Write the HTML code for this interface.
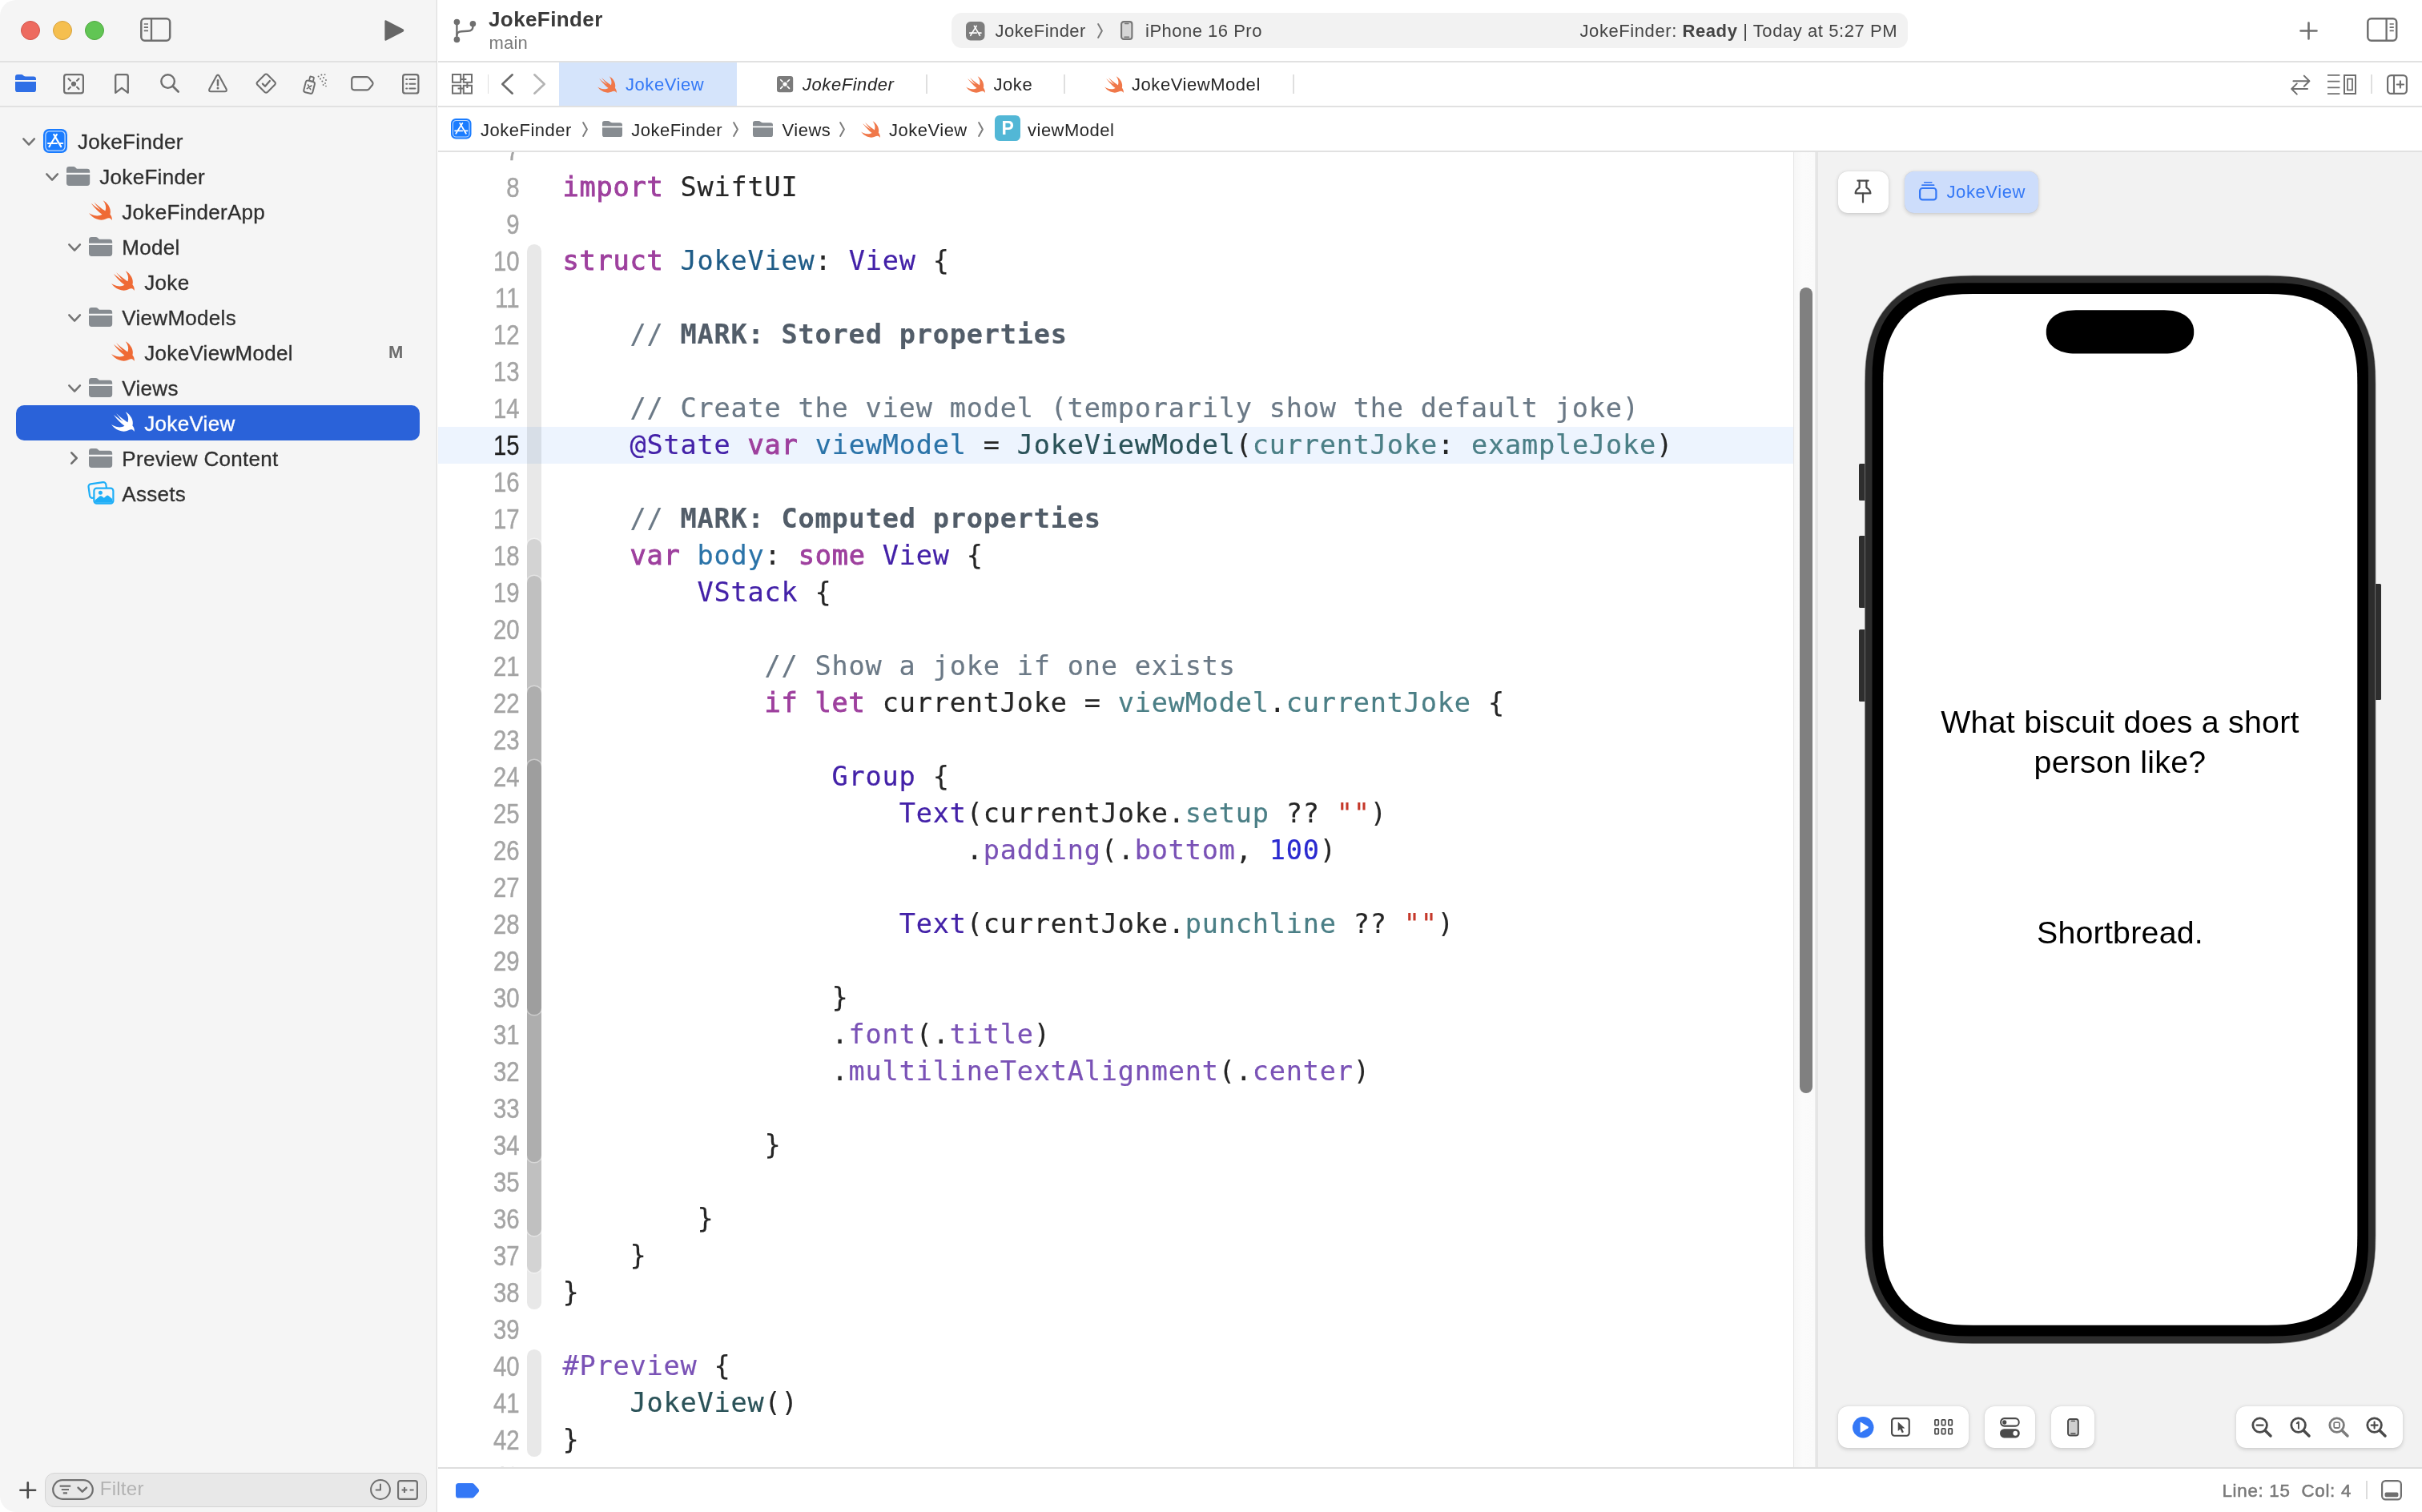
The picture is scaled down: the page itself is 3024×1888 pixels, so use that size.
<!DOCTYPE html>
<html lang="en"><head><meta charset="utf-8"><title>JokeFinder — JokeView.swift</title>
<style>
html,body{margin:0;padding:0;background:#fff;}
body{width:3024px;height:1888px;overflow:hidden;position:relative;font-family:"Liberation Sans",sans-serif;color:#262626;}
#win{transform:translateZ(0);will-change:transform;position:absolute;left:0;top:0;width:3024px;height:1888px;border-radius:20px;overflow:hidden;background:#fff;}
.abs{position:absolute;}
svg{position:absolute;overflow:visible;}
.t{position:absolute;white-space:pre;line-height:1;}
/* sidebar */
#side{position:absolute;left:0;top:0;width:545px;height:1888px;background:#f5f5f5;}
#sidediv{position:absolute;left:544.6px;top:0;width:1.5px;height:1888px;background:#dedede;box-shadow:-1px 0 1px rgba(0,0,0,.03);}
.hl{position:absolute;height:2px;background:#e1e1e1;}
.row{position:absolute;left:0;width:545px;height:44px;}
.row .lbl{position:absolute;top:8px;font-size:26px;line-height:30px;letter-spacing:.3px;color:#2f2f2f;-webkit-text-stroke:.3px #2f2f2f;white-space:pre;}
.row.sel .lbl{color:#fff;-webkit-text-stroke:.35px #fff;}
/* code */
#ed{position:absolute;left:546.5px;top:190px;width:1692.5px;height:1642px;overflow:hidden;background:#fff;}
.cl{position:absolute;left:156px;letter-spacing:.79px;height:46px;line-height:46px;white-space:pre;font-family:"DejaVu Sans Mono","Liberation Mono",monospace;font-size:33.6px;color:#262626;-webkit-text-stroke-width:.2px;}
.ln{position:absolute;left:0;width:101.5px;height:46px;line-height:46px;text-align:right;font-size:34.5px;color:#a4a4a4;-webkit-text-stroke:.45px #a4a4a4;transform:scaleX(.85);transform-origin:100% 50%;}
.ln.cur{color:#1f1f1f;-webkit-text-stroke:.3px #1f1f1f;}
.k{color:#9e409e;-webkit-text-stroke:.9px #9e409e;}
.c{color:#6b7986;}
.m{color:#525d69;font-weight:bold;}
.td{color:#1f5c87;}
.od{color:#2a73a8;}
.pc{color:#2a5258;}
.pf{color:#4b7f86;}
.oc{color:#4321a8;}
.of{color:#7a52b6;}
.s{color:#c5382a;}
.n{color:#2a2ad0;}

</style></head>
<body>
<div id="win">
<div id="side">
<div class="abs" style="left:26px;top:26px;width:24px;height:24px;box-sizing:border-box;border-radius:50%;background:#ed6a5f;border:1px solid #d1544a"></div>
<div class="abs" style="left:66px;top:26px;width:24px;height:24px;box-sizing:border-box;border-radius:50%;background:#f5bf4f;border:1px solid #d6a13d"></div>
<div class="abs" style="left:106px;top:26px;width:24px;height:24px;box-sizing:border-box;border-radius:50%;background:#61c554;border:1px solid #4ea73f"></div>
<svg style="left:175px;top:22px" width="38.5" height="30" viewBox="0 0 38.5 30" ><rect x="1.3" y="1.3" width="35.9" height="27.4" rx="4.4" fill="none" stroke="#6f6f6f" stroke-width="2.5"/><path d="M14 1.5V28.5" stroke="#6f6f6f" stroke-width="2.3"/><path d="M4.8 8H10M4.8 12.2H10M4.8 16.4H10" stroke="#6f6f6f" stroke-width="1.7"/></svg>
<svg style="left:479px;top:24px" width="27" height="28" viewBox="0 0 27 28" ><path d="M1.4 2.6Q1.4 0.6 3.2 1.5L24.6 12.5Q26.2 14 24.6 15.5L3.2 26.5Q1.4 27.4 1.4 25.4Z" fill="#666"/></svg>
<div class="hl" style="left:0;top:76px;width:545px"></div>
<div class="hl" style="left:0;top:132px;width:545px"></div>
<div class="abs" style="left:0;top:-.8px"><svg style="left:19px;top:94px" width="26" height="22" viewBox="0 0 29.2 24" preserveAspectRatio="none"><path d="M0 3.4Q0 0 3.4 0H8.4Q10 0 11.2 1.1L12 1.9Q13 2.8 14.6 2.8H25.8Q29.2 2.8 29.2 6.2V7.7H0Z M0 9.9H29.2V20.6Q29.2 24 25.8 24H3.4Q0 24 0 20.6Z" fill="#2f6fe6"/></svg><svg style="left:79px;top:92.5px" width="26" height="25.5" viewBox="0 0 26 25.5" ><rect x="1.1" y="1.1" width="23.8" height="23.3" rx="2.8" fill="none" stroke="#6f6f6f" stroke-width="2.2"/><g stroke="#6f6f6f" stroke-width="2.2" stroke-linecap="round"><path d="M6.5 6.3L8.9 8.7M19.5 6.3L17.1 8.7M6.5 19.2L8.9 16.8M19.5 19.2L17.1 16.8"/></g><circle cx="13" cy="12.75" r="3.1" fill="#6f6f6f"/></svg><svg style="left:143px;top:92.5px" width="18" height="25.5" viewBox="0 0 18 25.5" ><path d="M1.2 3.4Q1.2 1.2 3.4 1.2H14.6Q16.8 1.2 16.8 3.4V23.8L9 17.9L1.2 23.8Z" fill="none" stroke="#6f6f6f" stroke-width="2.3" stroke-linejoin="round"/></svg><svg style="left:200px;top:93px" width="24" height="24" viewBox="0 0 24 24" ><circle cx="9.6" cy="9.6" r="8.3" fill="none" stroke="#6f6f6f" stroke-width="2.4"/><path d="M15.8 15.8L22.6 22.6" stroke="#6f6f6f" stroke-width="2.8" stroke-linecap="round"/></svg><svg style="left:260px;top:92.5px" width="24" height="23.5" viewBox="0 0 24 23.5" ><path d="M12 1.6Q12.9 1.6 13.5 2.6L22.6 19.2Q23.6 22.2 20.8 22.3H3.2Q0.4 22.2 1.4 19.2L10.5 2.6Q11.1 1.6 12 1.6Z" fill="none" stroke="#6f6f6f" stroke-width="2.1" stroke-linejoin="round"/><path d="M12 8.3V14.2" stroke="#6f6f6f" stroke-width="2.5" stroke-linecap="round"/><circle cx="12" cy="18.1" r="1.5" fill="#6f6f6f"/></svg><svg style="left:319px;top:91.7px" width="26.5" height="26.3" viewBox="0 0 26.5 26.3" ><path d="M13.25 1.5Q14.2 1.5 15 2.3L24.4 11.7Q25.6 13.15 24.4 14.6L15 24Q13.25 25.4 11.5 24L2.1 14.6Q0.9 13.15 2.1 11.7L11.5 2.3Q12.3 1.5 13.25 1.5Z" fill="none" stroke="#6f6f6f" stroke-width="2.1" stroke-linejoin="round"/><path d="M8.9 13.6L12 16.7L17.9 10" fill="none" stroke="#6f6f6f" stroke-width="2.3" stroke-linecap="round" stroke-linejoin="round"/></svg><svg style="left:377.5px;top:92.5px" width="30" height="26" viewBox="0 0 30 26" ><g transform="rotate(14 9 16)"><rect x="2.6" y="9.4" width="11.4" height="15" rx="2.4" fill="none" stroke="#6f6f6f" stroke-width="2"/><rect x="6.2" y="3.6" width="5" height="5.6" rx="1" fill="none" stroke="#6f6f6f" stroke-width="1.8"/><path d="M6.1 14.6L10.6 19.4M10.6 14.6L6.1 19.4" stroke="#6f6f6f" stroke-width="1.7" stroke-linecap="round"/></g><g fill="#6f6f6f"><circle cx="19.6" cy="3.4" r="1"/><circle cx="23.4" cy="1.6" r="1"/><circle cx="27.6" cy="1.2" r=".9"/><circle cx="22" cy="6.4" r="1"/><circle cx="26" cy="5" r="1"/><circle cx="29" cy="8" r=".9"/><circle cx="24.4" cy="9.6" r="1"/><circle cx="28" cy="12" r=".9"/><circle cx="25.6" cy="14" r=".9"/><circle cx="29" cy="15.6" r=".8"/></g></svg><svg style="left:437.5px;top:96px" width="29" height="18.5" viewBox="0 0 29 18.5" ><path d="M4.2 1.2H20.2Q21.8 1.2 22.8 2.4L27.2 7.8Q28.2 9.25 27.2 10.7L22.8 16.1Q21.8 17.3 20.2 17.3H4.2Q1.2 17.3 1.2 14.3V4.2Q1.2 1.2 4.2 1.2Z" fill="none" stroke="#6f6f6f" stroke-width="2.2" stroke-linejoin="round"/></svg><svg style="left:501.5px;top:92.3px" width="21.5" height="25.6" viewBox="0 0 21.5 25.6" ><rect x="1.1" y="1.1" width="19.3" height="23.4" rx="2.8" fill="none" stroke="#6f6f6f" stroke-width="2.2"/><g stroke="#6f6f6f" stroke-width="2" stroke-linecap="round"><path d="M5.2 7H6.2M9.4 7H16.4M5.2 12.8H6.2M9.4 12.8H16.4M5.2 18.6H6.2M9.4 18.6H16.4"/></g></svg></div>
<div class="row" style="top:154px"><svg style="left:27.9px;top:17.7px" width="16.2" height="10" viewBox="0 0 16.2 10" ><path d="M1.3 1.3L8.1 8.7L14.899999999999999 1.3" fill="none" stroke="#747474" stroke-width="2.5" stroke-linecap="round" stroke-linejoin="round"/></svg><svg style="left:54px;top:7px" width="30" height="30" viewBox="0 0 30 30" ><rect x="0" y="0" width="30" height="30" rx="7.2" fill="#1a7cff"/><rect x="2.9" y="2.9" width="24.2" height="24.2" rx="4.8" fill="none" stroke="#fff" stroke-opacity=".72" stroke-width="1.3"/><g stroke="#fff" stroke-width="2.1" stroke-linecap="round" fill="none"><path d="M16.9 6.9L9.9 18.05"/><path d="M13.2 6.9L22.2 22.1"/><path d="M6 18.05H16.9"/><path d="M20.9 18.05H24.2"/><path d="M8.9 19.8L7.4 22.1"/></g></svg><span class="lbl" style="left:97px">JokeFinder</span></div>
<div class="row" style="top:198px"><svg style="left:56.9px;top:17.7px" width="16.2" height="10" viewBox="0 0 16.2 10" ><path d="M1.3 1.3L8.1 8.7L14.899999999999999 1.3" fill="none" stroke="#747474" stroke-width="2.5" stroke-linecap="round" stroke-linejoin="round"/></svg><svg style="left:82.8px;top:10px" width="29.2" height="24" viewBox="0 0 29.2 24" preserveAspectRatio="none"><path d="M0 3.4Q0 0 3.4 0H8.4Q10 0 11.2 1.1L12 1.9Q13 2.8 14.6 2.8H25.8Q29.2 2.8 29.2 6.2V7.7H0Z M0 9.9H29.2V20.6Q29.2 24 25.8 24H3.4Q0 24 0 20.6Z" fill="#878c91"/></svg><span class="lbl" style="left:124.3px">JokeFinder</span></div>
<div class="row" style="top:242px"><svg style="left:111px;top:8.2px" width="29" height="25" viewBox="2.35 3.3 18.3 16.5" preserveAspectRatio="none"><path d="M13.543 3.41c4.114 2.47 6.545 7.162 5.549 11.131-.024.093-.05.181-.076.272l.002.001c2.062 2.538 1.5 5.258 1.236 4.745-1.072-2.086-3.066-1.568-4.088-1.043a6.803 6.803 0 0 1-.281.158l-.02.012-.002.002c-2.115 1.123-4.957 1.205-7.812-.022a12.568 12.568 0 0 1-5.64-4.838c.649.48 1.35.902 2.097 1.252 3.019 1.414 6.051 1.311 8.197-.002C9.651 12.73 7.101 9.67 5.146 7.191a10.628 10.628 0 0 1-1.005-1.384c2.34 2.142 6.038 4.83 7.365 5.576C8.69 8.408 6.208 4.743 6.324 4.86c4.436 4.47 8.528 6.996 8.528 6.996.154.085.27.154.36.213.085-.215.16-.437.224-.668.708-2.588-.09-5.548-1.893-7.992z" fill="#ef6a35"/></svg><span class="lbl" style="left:152.3px">JokeFinderApp</span></div>
<div class="row" style="top:286px"><svg style="left:84.9px;top:17.7px" width="16.2" height="10" viewBox="0 0 16.2 10" ><path d="M1.3 1.3L8.1 8.7L14.899999999999999 1.3" fill="none" stroke="#747474" stroke-width="2.5" stroke-linecap="round" stroke-linejoin="round"/></svg><svg style="left:110.8px;top:10px" width="29.2" height="24" viewBox="0 0 29.2 24" preserveAspectRatio="none"><path d="M0 3.4Q0 0 3.4 0H8.4Q10 0 11.2 1.1L12 1.9Q13 2.8 14.6 2.8H25.8Q29.2 2.8 29.2 6.2V7.7H0Z M0 9.9H29.2V20.6Q29.2 24 25.8 24H3.4Q0 24 0 20.6Z" fill="#878c91"/></svg><span class="lbl" style="left:152.3px">Model</span></div>
<div class="row" style="top:330px"><svg style="left:139px;top:8.2px" width="29" height="25" viewBox="2.35 3.3 18.3 16.5" preserveAspectRatio="none"><path d="M13.543 3.41c4.114 2.47 6.545 7.162 5.549 11.131-.024.093-.05.181-.076.272l.002.001c2.062 2.538 1.5 5.258 1.236 4.745-1.072-2.086-3.066-1.568-4.088-1.043a6.803 6.803 0 0 1-.281.158l-.02.012-.002.002c-2.115 1.123-4.957 1.205-7.812-.022a12.568 12.568 0 0 1-5.64-4.838c.649.48 1.35.902 2.097 1.252 3.019 1.414 6.051 1.311 8.197-.002C9.651 12.73 7.101 9.67 5.146 7.191a10.628 10.628 0 0 1-1.005-1.384c2.34 2.142 6.038 4.83 7.365 5.576C8.69 8.408 6.208 4.743 6.324 4.86c4.436 4.47 8.528 6.996 8.528 6.996.154.085.27.154.36.213.085-.215.16-.437.224-.668.708-2.588-.09-5.548-1.893-7.992z" fill="#ef6a35"/></svg><span class="lbl" style="left:180.3px">Joke</span></div>
<div class="row" style="top:374px"><svg style="left:84.9px;top:17.7px" width="16.2" height="10" viewBox="0 0 16.2 10" ><path d="M1.3 1.3L8.1 8.7L14.899999999999999 1.3" fill="none" stroke="#747474" stroke-width="2.5" stroke-linecap="round" stroke-linejoin="round"/></svg><svg style="left:110.8px;top:10px" width="29.2" height="24" viewBox="0 0 29.2 24" preserveAspectRatio="none"><path d="M0 3.4Q0 0 3.4 0H8.4Q10 0 11.2 1.1L12 1.9Q13 2.8 14.6 2.8H25.8Q29.2 2.8 29.2 6.2V7.7H0Z M0 9.9H29.2V20.6Q29.2 24 25.8 24H3.4Q0 24 0 20.6Z" fill="#878c91"/></svg><span class="lbl" style="left:152.3px">ViewModels</span></div>
<div class="row" style="top:418px"><svg style="left:139px;top:8.2px" width="29" height="25" viewBox="2.35 3.3 18.3 16.5" preserveAspectRatio="none"><path d="M13.543 3.41c4.114 2.47 6.545 7.162 5.549 11.131-.024.093-.05.181-.076.272l.002.001c2.062 2.538 1.5 5.258 1.236 4.745-1.072-2.086-3.066-1.568-4.088-1.043a6.803 6.803 0 0 1-.281.158l-.02.012-.002.002c-2.115 1.123-4.957 1.205-7.812-.022a12.568 12.568 0 0 1-5.64-4.838c.649.48 1.35.902 2.097 1.252 3.019 1.414 6.051 1.311 8.197-.002C9.651 12.73 7.101 9.67 5.146 7.191a10.628 10.628 0 0 1-1.005-1.384c2.34 2.142 6.038 4.83 7.365 5.576C8.69 8.408 6.208 4.743 6.324 4.86c4.436 4.47 8.528 6.996 8.528 6.996.154.085.27.154.36.213.085-.215.16-.437.224-.668.708-2.588-.09-5.548-1.893-7.992z" fill="#ef6a35"/></svg><span class="lbl" style="left:180.3px">JokeViewModel</span><span class="t" style="left:485px;top:11px;font-size:22px;font-weight:bold;color:#6e6e6e">M</span></div>
<div class="row" style="top:462px"><svg style="left:84.9px;top:17.7px" width="16.2" height="10" viewBox="0 0 16.2 10" ><path d="M1.3 1.3L8.1 8.7L14.899999999999999 1.3" fill="none" stroke="#747474" stroke-width="2.5" stroke-linecap="round" stroke-linejoin="round"/></svg><svg style="left:110.8px;top:10px" width="29.2" height="24" viewBox="0 0 29.2 24" preserveAspectRatio="none"><path d="M0 3.4Q0 0 3.4 0H8.4Q10 0 11.2 1.1L12 1.9Q13 2.8 14.6 2.8H25.8Q29.2 2.8 29.2 6.2V7.7H0Z M0 9.9H29.2V20.6Q29.2 24 25.8 24H3.4Q0 24 0 20.6Z" fill="#878c91"/></svg><span class="lbl" style="left:152.3px">Views</span></div>
<div class="row sel" style="top:506px"><div class="abs" style="left:20px;top:0;width:504px;height:44px;border-radius:10px;background:#2a62d9"></div><svg style="left:139px;top:8.2px" width="29" height="25" viewBox="2.35 3.3 18.3 16.5" preserveAspectRatio="none"><path d="M13.543 3.41c4.114 2.47 6.545 7.162 5.549 11.131-.024.093-.05.181-.076.272l.002.001c2.062 2.538 1.5 5.258 1.236 4.745-1.072-2.086-3.066-1.568-4.088-1.043a6.803 6.803 0 0 1-.281.158l-.02.012-.002.002c-2.115 1.123-4.957 1.205-7.812-.022a12.568 12.568 0 0 1-5.64-4.838c.649.48 1.35.902 2.097 1.252 3.019 1.414 6.051 1.311 8.197-.002C9.651 12.73 7.101 9.67 5.146 7.191a10.628 10.628 0 0 1-1.005-1.384c2.34 2.142 6.038 4.83 7.365 5.576C8.69 8.408 6.208 4.743 6.324 4.86c4.436 4.47 8.528 6.996 8.528 6.996.154.085.27.154.36.213.085-.215.16-.437.224-.668.708-2.588-.09-5.548-1.893-7.992z" fill="#fff"/></svg><span class="lbl" style="left:180.3px">JokeView</span></div>
<div class="row" style="top:550px"><svg style="left:87.5px;top:14px" width="9" height="16" viewBox="0 0 9 16" ><path d="M1.3 1.3L7.7 8.0L1.3 14.7" fill="none" stroke="#6e6e6e" stroke-width="2.6" stroke-linecap="round" stroke-linejoin="round"/></svg><svg style="left:110.8px;top:10px" width="29.2" height="24" viewBox="0 0 29.2 24" preserveAspectRatio="none"><path d="M0 3.4Q0 0 3.4 0H8.4Q10 0 11.2 1.1L12 1.9Q13 2.8 14.6 2.8H25.8Q29.2 2.8 29.2 6.2V7.7H0Z M0 9.9H29.2V20.6Q29.2 24 25.8 24H3.4Q0 24 0 20.6Z" fill="#878c91"/></svg><span class="lbl" style="left:152.3px">Preview Content</span></div>
<div class="row" style="top:594px"><svg style="left:109.5px;top:8px" width="33" height="28" viewBox="0 0 33 28" ><rect x="1.2" y="1.2" width="22" height="17.6" rx="3.2" fill="#f6f6f6" stroke="#1eaef7" stroke-width="2.2" transform="rotate(-8 12 10)"/><rect x="7.4" y="7.6" width="24" height="19" rx="3.4" fill="#f6f6f6" stroke="#1eaef7" stroke-width="2.2"/><path d="M8.6 22.6L14.6 17.6Q15.8 16.8 17 17.6L19.8 19.8L23 16.9Q24.2 16 25.4 16.9L30.2 21V24Q30.2 25.8 28 25.8H10.6Q8.6 25.8 8.6 24Z" fill="#1eaef7"/><circle cx="15.4" cy="13.2" r="2.5" fill="#1eaef7"/></svg><span class="lbl" style="left:152.3px">Assets</span></div>
<svg style="left:23.5px;top:1849.5px" width="21.5" height="21.5" viewBox="0 0 21.5 21.5" ><path d="M10.75 1.4V20.1M1.4 10.75H20.1" stroke="#4a4a4a" stroke-width="2.7" stroke-linecap="round"/></svg><div class="abs" style="left:56px;top:1838.5px;width:477px;height:43px;box-sizing:border-box;border-radius:12px;background:#e8e8e8;border:1.5px solid #d4d4d4"></div><svg style="left:65px;top:1847px" width="52" height="26" viewBox="0 0 52 26" ><rect x="1.2" y="1.2" width="49.6" height="23.6" rx="11.8" fill="none" stroke="#6f6f6f" stroke-width="2.2"/><path d="M9.6 8.6H23.2M11.8 13H21M13.8 17.4H19" stroke="#6f6f6f" stroke-width="2.2"/><path d="M32.6 10.6L37.8 15.6L43 10.6" fill="none" stroke="#6f6f6f" stroke-width="2.6" stroke-linecap="round" stroke-linejoin="round"/></svg><span class="t" style="left:124.8px;top:1845.4px;font-size:24px;line-height:27.58px;color:#b2b2b2;letter-spacing:.25px">Filter</span><svg style="left:461.5px;top:1847px" width="26" height="26" viewBox="0 0 26 26" ><circle cx="13" cy="13" r="11.9" fill="none" stroke="#6f6f6f" stroke-width="2"/><path d="M13 6.4V13.4H7.6" fill="none" stroke="#6f6f6f" stroke-width="2" stroke-linecap="round" stroke-linejoin="round"/></svg><svg style="left:496px;top:1847.5px" width="26" height="25" viewBox="0 0 26 25" ><rect x="1.1" y="1.1" width="23.8" height="22.8" rx="2.6" fill="none" stroke="#6f6f6f" stroke-width="2.1"/><path d="M5.6 12.5H12.4M9 9.1V15.9M15.6 12.5H20.6" stroke="#6f6f6f" stroke-width="2.1"/></svg>
</div><div id="sidediv"></div>
<svg style="left:566px;top:23px" width="29" height="31" viewBox="0 0 29 31" ><g fill="none" stroke="#6f6f6f" stroke-width="2.4" stroke-linecap="round"><path d="M4.4 7.6V23.4"/><path d="M24.4 9.6V10.4Q24.4 15.4 18 15.8L10.4 16.3Q4.4 16.8 4.4 21"/></g><circle cx="4.4" cy="4.6" r="3.8" fill="#6f6f6f"/><circle cx="24.4" cy="6.8" r="3.8" fill="#6f6f6f"/><circle cx="4.4" cy="26.4" r="3.8" fill="#6f6f6f"/></svg>
<span class="t" style="left:610px;top:9.75px;font-size:26px;line-height:29.87px;color:#3a3a3a;font-weight:bold;letter-spacing:.4px">JokeFinder</span>
<span class="t" style="left:610.5px;top:40.94px;font-size:22px;line-height:25.28px;color:#7a7a7a;letter-spacing:.2px">main</span>
<div class="abs" style="left:1188px;top:15.5px;width:1194px;height:44.5px;border-radius:13px;background:#f2f2f2"></div>
<svg style="left:1206px;top:26.5px" width="23.5" height="23.5" viewBox="0 0 30 30" ><rect x="0" y="0" width="30" height="30" rx="7.2" fill="#7d7d7d"/><g stroke="#fff" stroke-width="2.1" stroke-linecap="round" fill="none"><path d="M16.9 6.9L9.9 18.05"/><path d="M13.2 6.9L22.2 22.1"/><path d="M6 18.05H16.9"/><path d="M20.9 18.05H24.2"/><path d="M8.9 19.8L7.4 22.1"/></g></svg>
<span class="t" style="left:1242.5px;top:25.74px;font-size:22px;line-height:25.28px;color:#444;letter-spacing:.45px">JokeFinder</span>
<svg style="left:1369.5px;top:28.8px" width="7" height="19" viewBox="0 0 7 19" ><path d="M1.1 1.1L5.9 9.5L1.1 17.9" fill="none" stroke="#7c7c7c" stroke-width="2" stroke-linecap="round" stroke-linejoin="round"/></svg>
<svg style="left:1398.5px;top:26px" width="15.5" height="24" viewBox="0 0 15.5 24" ><rect x="1.1" y="1.1" width="13.3" height="21.8" rx="3" fill="#d6d6d6" stroke="#757575" stroke-width="2.1"/><path d="M5.6 3.6H9.9M5 20.2H10.5" stroke="#757575" stroke-width="1.5" stroke-linecap="round"/></svg>
<span class="t" style="left:1430px;top:25.74px;font-size:22px;line-height:25.28px;color:#444;letter-spacing:.5px">iPhone 16 Pro</span>
<span class="t" style="left:1972.5px;top:25.74px;font-size:22px;line-height:25.28px;color:#444;letter-spacing:.58px">JokeFinder: <b>Ready</b> | Today at 5:27 PM</span>
<svg style="left:2870.5px;top:26.5px" width="23" height="23" viewBox="0 0 23 23" ><path d="M11.5 1.5V21.5M1.5 11.5H21.5" stroke="#6f6f6f" stroke-width="2.6" stroke-linecap="round"/></svg>
<svg style="left:2955px;top:22px" width="38.5" height="30" viewBox="0 0 38.5 30" ><rect x="1.3" y="1.3" width="35.9" height="27.4" rx="4.4" fill="none" stroke="#6f6f6f" stroke-width="2.5"/><path d="M24.6 1.5V28.5" stroke="#6f6f6f" stroke-width="2.3"/><path d="M28.6 8H33.8M28.6 12.2H33.8M28.6 16.4H33.8" stroke="#6f6f6f" stroke-width="1.7"/></svg>
<div class="hl" style="left:547px;top:76px;width:2477px"></div>
<div class="abs" style="left:698px;top:78px;width:222px;height:54px;background:#d5e4fb"></div>
<svg style="left:564px;top:92.2px" width="26" height="25.6" viewBox="0 0 26 25.6" ><g fill="none" stroke="#6f6f6f" stroke-width="2"><rect x="1" y="1" width="10.2" height="9.8"/><rect x="14.8" y="1" width="10.2" height="9.8"/><rect x="1" y="14.8" width="10.2" height="9.8"/><rect x="14.8" y="14.8" width="10.2" height="9.8"/><path d="M11.2 7.1H18.4M7.6 18.6H14.8M19.4 10.8V18"/></g></svg>
<div class="abs" style="left:608.5px;top:93px;width:1.5px;height:23.5px;background:#dfdfdf"></div>
<svg style="left:626px;top:92px" width="15" height="26" viewBox="0 0 15 26" ><path d="M13.7 1.3L1.3 13.0L13.7 24.7" fill="none" stroke="#6b6b6b" stroke-width="2.6" stroke-linecap="round" stroke-linejoin="round"/></svg>
<svg style="left:666px;top:92px" width="15" height="26" viewBox="0 0 15 26" ><path d="M1.3 1.3L13.7 13.0L1.3 24.7" fill="none" stroke="#b4b4b4" stroke-width="2.6" stroke-linecap="round" stroke-linejoin="round"/></svg>
<svg style="left:746px;top:95px" width="24" height="21" viewBox="2.35 3.3 18.3 16.5" preserveAspectRatio="none"><path d="M13.543 3.41c4.114 2.47 6.545 7.162 5.549 11.131-.024.093-.05.181-.076.272l.002.001c2.062 2.538 1.5 5.258 1.236 4.745-1.072-2.086-3.066-1.568-4.088-1.043a6.803 6.803 0 0 1-.281.158l-.02.012-.002.002c-2.115 1.123-4.957 1.205-7.812-.022a12.568 12.568 0 0 1-5.64-4.838c.649.48 1.35.902 2.097 1.252 3.019 1.414 6.051 1.311 8.197-.002C9.651 12.73 7.101 9.67 5.146 7.191a10.628 10.628 0 0 1-1.005-1.384c2.34 2.142 6.038 4.83 7.365 5.576C8.69 8.408 6.208 4.743 6.324 4.86c4.436 4.47 8.528 6.996 8.528 6.996.154.085.27.154.36.213.085-.215.16-.437.224-.668.708-2.588-.09-5.548-1.893-7.992z" fill="#f0784a"/></svg>
<span class="t" style="left:781px;top:92.74px;font-size:22px;line-height:25.28px;color:#3378f6;letter-spacing:.55px">JokeView</span>
<svg style="left:969.8px;top:95px" width="20.2" height="20.2" viewBox="0 0 20 20" ><rect x="0" y="0" width="20" height="20" rx="3.2" fill="#7b7b7b"/><g stroke="#fff" stroke-width="1.7" stroke-linecap="round"><path d="M4.7 4.7L6.9 6.9M15.3 4.7L13.1 6.9M4.7 15.3L6.9 13.1M15.3 15.3L13.1 13.1"/></g><circle cx="10" cy="10" r="2.6" fill="#fff"/></svg>
<span class="t" style="left:1002px;top:92.74px;font-size:22px;line-height:25.28px;color:#262626;font-style:italic;letter-spacing:.55px">JokeFinder</span>
<div class="abs" style="left:1156.25px;top:93px;width:1.5px;height:23.5px;background:#dfdfdf"></div>
<div class="abs" style="left:1328.25px;top:93px;width:1.5px;height:23.5px;background:#dfdfdf"></div>
<div class="abs" style="left:1614.25px;top:93px;width:1.5px;height:23.5px;background:#dfdfdf"></div>
<svg style="left:1206px;top:95px" width="24" height="21" viewBox="2.35 3.3 18.3 16.5" preserveAspectRatio="none"><path d="M13.543 3.41c4.114 2.47 6.545 7.162 5.549 11.131-.024.093-.05.181-.076.272l.002.001c2.062 2.538 1.5 5.258 1.236 4.745-1.072-2.086-3.066-1.568-4.088-1.043a6.803 6.803 0 0 1-.281.158l-.02.012-.002.002c-2.115 1.123-4.957 1.205-7.812-.022a12.568 12.568 0 0 1-5.64-4.838c.649.48 1.35.902 2.097 1.252 3.019 1.414 6.051 1.311 8.197-.002C9.651 12.73 7.101 9.67 5.146 7.191a10.628 10.628 0 0 1-1.005-1.384c2.34 2.142 6.038 4.83 7.365 5.576C8.69 8.408 6.208 4.743 6.324 4.86c4.436 4.47 8.528 6.996 8.528 6.996.154.085.27.154.36.213.085-.215.16-.437.224-.668.708-2.588-.09-5.548-1.893-7.992z" fill="#f0784a"/></svg>
<span class="t" style="left:1240.5px;top:92.74px;font-size:22px;line-height:25.28px;color:#262626;letter-spacing:.55px">Joke</span>
<svg style="left:1378.7px;top:95px" width="24" height="21" viewBox="2.35 3.3 18.3 16.5" preserveAspectRatio="none"><path d="M13.543 3.41c4.114 2.47 6.545 7.162 5.549 11.131-.024.093-.05.181-.076.272l.002.001c2.062 2.538 1.5 5.258 1.236 4.745-1.072-2.086-3.066-1.568-4.088-1.043a6.803 6.803 0 0 1-.281.158l-.02.012-.002.002c-2.115 1.123-4.957 1.205-7.812-.022a12.568 12.568 0 0 1-5.64-4.838c.649.48 1.35.902 2.097 1.252 3.019 1.414 6.051 1.311 8.197-.002C9.651 12.73 7.101 9.67 5.146 7.191a10.628 10.628 0 0 1-1.005-1.384c2.34 2.142 6.038 4.83 7.365 5.576C8.69 8.408 6.208 4.743 6.324 4.86c4.436 4.47 8.528 6.996 8.528 6.996.154.085.27.154.36.213.085-.215.16-.437.224-.668.708-2.588-.09-5.548-1.893-7.992z" fill="#f0784a"/></svg>
<span class="t" style="left:1413px;top:92.74px;font-size:22px;line-height:25.28px;color:#262626;letter-spacing:.55px">JokeViewModel</span>
<svg style="left:2860px;top:92.5px" width="24.5" height="26" viewBox="0 0 24.5 26" ><g fill="none" stroke="#6f6f6f" stroke-width="2" stroke-linecap="round" stroke-linejoin="round"><path d="M3.4 8.2H23.2M16.8 1.6L23.4 8.2L16.8 14.8"/><path d="M21 18H1.4M7.8 11.4L1.2 18L7.8 24.6"/></g></svg>
<svg style="left:2906px;top:92.5px" width="36" height="25" viewBox="0 0 36 25" ><g stroke="#6f6f6f" stroke-width="1.7"><path d="M0 .9H15.4M0 8.6H15.4M0 16.4H15.4M0 24.1H15.4"/></g><rect x="21" y="1" width="14" height="23" fill="none" stroke="#6f6f6f" stroke-width="2"/><rect x="25" y="5.6" width="6" height="13.8" fill="none" stroke="#6f6f6f" stroke-width="1.8"/></svg>
<div class="abs" style="left:2960px;top:93px;width:1.5px;height:23.5px;background:#dfdfdf"></div>
<svg style="left:2980px;top:92.5px" width="26" height="25" viewBox="0 0 26 25" ><rect x="1.1" y="1.1" width="23.8" height="22.8" rx="4.2" fill="none" stroke="#6f6f6f" stroke-width="2.2"/><path d="M9 1.5V23.5" stroke="#6f6f6f" stroke-width="2.1"/><path d="M12.8 12.5H21M16.9 8.4V16.6" stroke="#6f6f6f" stroke-width="2.1" stroke-linecap="round"/></svg>
<div class="hl" style="left:547px;top:132px;width:2477px"></div>
<svg style="left:563px;top:148px" width="25.5" height="25.5" viewBox="0 0 30 30" ><rect x="0" y="0" width="30" height="30" rx="7.2" fill="#1a7cff"/><rect x="2.9" y="2.9" width="24.2" height="24.2" rx="4.8" fill="none" stroke="#fff" stroke-opacity=".72" stroke-width="1.3"/><g stroke="#fff" stroke-width="2.1" stroke-linecap="round" fill="none"><path d="M16.9 6.9L9.9 18.05"/><path d="M13.2 6.9L22.2 22.1"/><path d="M6 18.05H16.9"/><path d="M20.9 18.05H24.2"/><path d="M8.9 19.8L7.4 22.1"/></g></svg>
<span class="t" style="left:600px;top:149.74px;font-size:22px;line-height:25.28px;color:#262626;letter-spacing:.5px">JokeFinder</span>
<svg style="left:727px;top:152.2px" width="7" height="19" viewBox="0 0 7 19" ><path d="M1.1 1.1L5.9 9.5L1.1 17.9" fill="none" stroke="#7c7c7c" stroke-width="2" stroke-linecap="round" stroke-linejoin="round"/></svg>
<svg style="left:752px;top:150.7px" width="25" height="20" viewBox="0 0 29.2 24" preserveAspectRatio="none"><path d="M0 3.4Q0 0 3.4 0H8.4Q10 0 11.2 1.1L12 1.9Q13 2.8 14.6 2.8H25.8Q29.2 2.8 29.2 6.2V7.7H0Z M0 9.9H29.2V20.6Q29.2 24 25.8 24H3.4Q0 24 0 20.6Z" fill="#878c91"/></svg>
<span class="t" style="left:788.2px;top:149.74px;font-size:22px;line-height:25.28px;color:#262626;letter-spacing:.5px">JokeFinder</span>
<svg style="left:915px;top:152.2px" width="7" height="19" viewBox="0 0 7 19" ><path d="M1.1 1.1L5.9 9.5L1.1 17.9" fill="none" stroke="#7c7c7c" stroke-width="2" stroke-linecap="round" stroke-linejoin="round"/></svg>
<svg style="left:939.7px;top:150.7px" width="25" height="20" viewBox="0 0 29.2 24" preserveAspectRatio="none"><path d="M0 3.4Q0 0 3.4 0H8.4Q10 0 11.2 1.1L12 1.9Q13 2.8 14.6 2.8H25.8Q29.2 2.8 29.2 6.2V7.7H0Z M0 9.9H29.2V20.6Q29.2 24 25.8 24H3.4Q0 24 0 20.6Z" fill="#878c91"/></svg>
<span class="t" style="left:976.5px;top:149.74px;font-size:22px;line-height:25.28px;color:#262626;letter-spacing:.5px">Views</span>
<svg style="left:1048px;top:152.2px" width="7" height="19" viewBox="0 0 7 19" ><path d="M1.1 1.1L5.9 9.5L1.1 17.9" fill="none" stroke="#7c7c7c" stroke-width="2" stroke-linecap="round" stroke-linejoin="round"/></svg>
<svg style="left:1074.6px;top:150.5px" width="24" height="21" viewBox="2.35 3.3 18.3 16.5" preserveAspectRatio="none"><path d="M13.543 3.41c4.114 2.47 6.545 7.162 5.549 11.131-.024.093-.05.181-.076.272l.002.001c2.062 2.538 1.5 5.258 1.236 4.745-1.072-2.086-3.066-1.568-4.088-1.043a6.803 6.803 0 0 1-.281.158l-.02.012-.002.002c-2.115 1.123-4.957 1.205-7.812-.022a12.568 12.568 0 0 1-5.64-4.838c.649.48 1.35.902 2.097 1.252 3.019 1.414 6.051 1.311 8.197-.002C9.651 12.73 7.101 9.67 5.146 7.191a10.628 10.628 0 0 1-1.005-1.384c2.34 2.142 6.038 4.83 7.365 5.576C8.69 8.408 6.208 4.743 6.324 4.86c4.436 4.47 8.528 6.996 8.528 6.996.154.085.27.154.36.213.085-.215.16-.437.224-.668.708-2.588-.09-5.548-1.893-7.992z" fill="#f0784a"/></svg>
<span class="t" style="left:1110px;top:149.74px;font-size:22px;line-height:25.28px;color:#262626;letter-spacing:.5px">JokeView</span>
<svg style="left:1220.7px;top:152.2px" width="7" height="19" viewBox="0 0 7 19" ><path d="M1.1 1.1L5.9 9.5L1.1 17.9" fill="none" stroke="#7c7c7c" stroke-width="2" stroke-linecap="round" stroke-linejoin="round"/></svg>
<div class="abs" style="left:1242px;top:144px;width:32px;height:32px;border-radius:6px;background:#52b7d6"></div>
<span class="t" style="left:1250.5px;top:147.32px;font-size:23px;line-height:26.43px;color:#fff;font-weight:bold">P</span>
<span class="t" style="left:1283px;top:149.74px;font-size:22px;line-height:25.28px;color:#262626;letter-spacing:.5px">viewModel</span>
<div class="hl" style="left:547px;top:188px;width:2477px"></div>
<div class="hl" style="left:547px;top:1832px;width:2477px;background:#dedede"></div>
<svg style="left:568.5px;top:1852px" width="29.5" height="18.5" viewBox="0 0 29.5 18.5" ><path d="M3.6 0H20.2Q22 0 23 1.2L28.6 7.6Q29.8 9.25 28.6 10.9L23 17.3Q22 18.5 20.2 18.5H3.6Q0 18.5 0 14.9V3.6Q0 0 3.6 0Z" fill="#3478f6"/></svg>
<span class="t" style="left:2774.5px;top:1848.66px;font-size:22.3px;line-height:25.62px;color:#797979;letter-spacing:.72px;-webkit-text-stroke:.55px #797979">Line: 15  Col: 4</span>
<div class="abs" style="left:2954px;top:1849px;width:1.5px;height:23px;background:#dcdcdc"></div>
<svg style="left:2973px;top:1848px" width="26" height="25.5" viewBox="0 0 26 25.5" ><rect x="1.1" y="1.1" width="23.8" height="23.3" rx="4.4" fill="none" stroke="#6f6f6f" stroke-width="2.2"/><rect x="4.6" y="15.6" width="16.8" height="5.6" rx="1.6" fill="#6f6f6f"/></svg>
<div id="ed">
<div class="abs" style="left:0;top:342.5px;width:1693px;height:46px;background:#edf4fe"></div>
<div class="abs" style="left:111.8px;top:115.0px;width:17.4px;height:1329.5px;border-radius:8.7px;background:rgba(0,0,0,.092);overflow:hidden"><div class="abs" style="left:0;top:368.0px;width:17.4px;height:915.5px;border-radius:8.7px;background:rgba(0,0,0,.092);box-shadow:0 0 0 1.6px rgba(255,255,255,.38);"><div class="abs" style="left:0;top:46.0px;width:17.4px;height:823.5px;border-radius:8.7px;background:rgba(0,0,0,.092);box-shadow:0 0 0 1.6px rgba(255,255,255,.38);"><div class="abs" style="left:0;top:138.0px;width:17.4px;height:593.5px;border-radius:8.7px;background:rgba(0,0,0,.092);box-shadow:0 0 0 1.6px rgba(255,255,255,.38);"><div class="abs" style="left:0;top:92.0px;width:17.4px;height:317.5px;border-radius:8.7px;background:rgba(0,0,0,.092);box-shadow:0 0 0 1.6px rgba(255,255,255,.38);"></div></div></div></div></div>
<div class="abs" style="left:111.8px;top:1495.0px;width:17.4px;height:133.5px;border-radius:8.7px;background:rgba(0,0,0,.092)"></div>
<div class="ln" style="top:-25.5px">7</div>
<div class="ln" style="top:20.5px">8</div>
<div class="cl" style="top:20.5px"><span class="k">import</span> SwiftUI</div>
<div class="ln" style="top:66.5px">9</div>
<div class="ln" style="top:112.5px">10</div>
<div class="cl" style="top:112.5px"><span class="k">struct</span> <span class="td">JokeView</span>: <span class="oc">View</span> {</div>
<div class="ln" style="top:158.5px">11</div>
<div class="ln" style="top:204.5px">12</div>
<div class="cl" style="top:204.5px">    <span class="c">// </span><span class="m">MARK: Stored properties</span></div>
<div class="ln" style="top:250.5px">13</div>
<div class="ln" style="top:296.5px">14</div>
<div class="cl" style="top:296.5px">    <span class="c">// Create the view model (temporarily show the default joke)</span></div>
<div class="ln cur" style="top:342.5px">15</div>
<div class="cl" style="top:342.5px">    <span class="oc">@State</span> <span class="k">var</span> <span class="od">viewModel</span> = <span class="pc">JokeViewModel</span>(<span class="pf">currentJoke</span>: <span class="pf">exampleJoke</span>)</div>
<div class="ln" style="top:388.5px">16</div>
<div class="ln" style="top:434.5px">17</div>
<div class="cl" style="top:434.5px">    <span class="c">// </span><span class="m">MARK: Computed properties</span></div>
<div class="ln" style="top:480.5px">18</div>
<div class="cl" style="top:480.5px">    <span class="k">var</span> <span class="od">body</span>: <span class="k">some</span> <span class="oc">View</span> {</div>
<div class="ln" style="top:526.5px">19</div>
<div class="cl" style="top:526.5px">        <span class="oc">VStack</span> {</div>
<div class="ln" style="top:572.5px">20</div>
<div class="ln" style="top:618.5px">21</div>
<div class="cl" style="top:618.5px">            <span class="c">// Show a joke if one exists</span></div>
<div class="ln" style="top:664.5px">22</div>
<div class="cl" style="top:664.5px">            <span class="k">if</span> <span class="k">let</span> currentJoke = <span class="pf">viewModel</span>.<span class="pf">currentJoke</span> {</div>
<div class="ln" style="top:710.5px">23</div>
<div class="ln" style="top:756.5px">24</div>
<div class="cl" style="top:756.5px">                <span class="oc">Group</span> {</div>
<div class="ln" style="top:802.5px">25</div>
<div class="cl" style="top:802.5px">                    <span class="oc">Text</span>(currentJoke.<span class="pf">setup</span> ?? <span class="s">&quot;&quot;</span>)</div>
<div class="ln" style="top:848.5px">26</div>
<div class="cl" style="top:848.5px">                        .<span class="of">padding</span>(.<span class="of">bottom</span>, <span class="n">100</span>)</div>
<div class="ln" style="top:894.5px">27</div>
<div class="ln" style="top:940.5px">28</div>
<div class="cl" style="top:940.5px">                    <span class="oc">Text</span>(currentJoke.<span class="pf">punchline</span> ?? <span class="s">&quot;&quot;</span>)</div>
<div class="ln" style="top:986.5px">29</div>
<div class="ln" style="top:1032.5px">30</div>
<div class="cl" style="top:1032.5px">                }</div>
<div class="ln" style="top:1078.5px">31</div>
<div class="cl" style="top:1078.5px">                .<span class="of">font</span>(.<span class="of">title</span>)</div>
<div class="ln" style="top:1124.5px">32</div>
<div class="cl" style="top:1124.5px">                .<span class="of">multilineTextAlignment</span>(.<span class="of">center</span>)</div>
<div class="ln" style="top:1170.5px">33</div>
<div class="ln" style="top:1216.5px">34</div>
<div class="cl" style="top:1216.5px">            }</div>
<div class="ln" style="top:1262.5px">35</div>
<div class="ln" style="top:1308.5px">36</div>
<div class="cl" style="top:1308.5px">        }</div>
<div class="ln" style="top:1354.5px">37</div>
<div class="cl" style="top:1354.5px">    }</div>
<div class="ln" style="top:1400.5px">38</div>
<div class="cl" style="top:1400.5px">}</div>
<div class="ln" style="top:1446.5px">39</div>
<div class="ln" style="top:1492.5px">40</div>
<div class="cl" style="top:1492.5px"><span class="of">#Preview</span> {</div>
<div class="ln" style="top:1538.5px">41</div>
<div class="cl" style="top:1538.5px">    <span class="pc">JokeView</span>()</div>
<div class="ln" style="top:1584.5px">42</div>
<div class="cl" style="top:1584.5px">}</div>
<div class="ln" style="top:1630.5px">43</div>
</div>
<div class="abs" style="left:2239px;top:190px;width:28px;height:1642px;box-sizing:border-box;background:linear-gradient(90deg,#f6f6f6,#fbfbfb 40%,#fafafa);border-left:1.5px solid #e6e6e6;border-right:1.5px solid #ececec"></div>
<div class="abs" style="left:2247px;top:359px;width:16px;height:1006px;border-radius:8px;background:#808080"></div>
<div class="abs" style="left:2267px;top:190px;width:757px;height:1642px;background:#f2f2f2;border-left:3px solid #e5e5e5;box-sizing:border-box"></div>
<div class="abs" style="left:2295px;top:213.5px;width:63px;height:52px;border-radius:12px;background:#fff;box-shadow:0 1.5px 5px rgba(0,0,0,.16),0 0 1px rgba(0,0,0,.14)"></div>
<svg style="left:2315px;top:224px" width="22" height="30" viewBox="0 0 22 30" ><g fill="none" stroke="#4a4a4a" stroke-width="2.2" stroke-linecap="round" stroke-linejoin="round"><path d="M4.4 1.6H17.6"/><path d="M6.6 1.8V10.2Q1.8 13 1.6 17.4H20.4Q20.2 13 15.4 10.2V1.8"/><path d="M11 17.6V28.4"/></g></svg>
<div class="abs" style="left:2378px;top:213.5px;width:167px;height:52px;border-radius:12px;background:#cdddfb;box-shadow:0 1.5px 5px rgba(0,0,0,.16),0 0 1px rgba(0,0,0,.14)"></div>
<svg style="left:2395.5px;top:227px" width="22.5" height="23.5" viewBox="0 0 22.5 23.5" ><g fill="none" stroke="#3478f6" stroke-linecap="round"><path d="M6.6 .8H15.9" stroke-width="1.5"/><path d="M4 4.2H18.5" stroke-width="1.8"/><rect x="1.1" y="8" width="20.3" height="14.4" rx="3.2" stroke-width="2.2"/></g></svg>
<span class="t" style="left:2430.5px;top:227.24px;font-size:22px;line-height:25.28px;color:#3478f6;letter-spacing:.6px">JokeView</span>
<div class="abs" style="left:2320.6px;top:579px;width:12px;height:46px;background:#2e2e2e;border-radius:1.5px"></div>
<div class="abs" style="left:2320.6px;top:669px;width:12px;height:90px;background:#2e2e2e;border-radius:1.5px"></div>
<div class="abs" style="left:2320.6px;top:786px;width:12px;height:89.7px;background:#2e2e2e;border-radius:1.5px"></div>
<div class="abs" style="left:2961px;top:729.4px;width:12.2px;height:144.6px;background:#2e2e2e;border-radius:1.5px"></div>
<svg style="left:0px;top:0px" width="3024" height="1888" viewBox="0 0 3024 1888" ><path d="M2328.8 479.6L2329.1 463.3L2329.9 451.2L2331.3 440.5L2333.2 430.6L2335.7 421.4L2338.7 412.7L2342.2 404.6L2346.2 397.1L2350.8 390.0L2355.9 383.4L2361.5 377.3L2367.6 371.7L2374.2 366.6L2381.3 362.0L2388.8 358.0L2396.9 354.5L2405.6 351.5L2414.8 349.0L2424.7 347.1L2435.4 345.7L2447.5 344.9L2463.8 344.6L2830.7 344.6L2847.0 344.9L2859.1 345.7L2869.8 347.1L2879.7 349.0L2888.9 351.5L2897.6 354.5L2905.7 358.0L2913.2 362.0L2920.3 366.6L2926.9 371.7L2933.0 377.3L2938.6 383.4L2943.7 390.0L2948.3 397.1L2952.3 404.6L2955.8 412.7L2958.8 421.4L2961.3 430.6L2963.2 440.5L2964.6 451.2L2965.4 463.3L2965.7 479.6L2965.7 1542.2L2965.4 1558.5L2964.6 1570.6L2963.2 1581.3L2961.3 1591.2L2958.8 1600.4L2955.8 1609.1L2952.3 1617.2L2948.3 1624.7L2943.7 1631.8L2938.6 1638.4L2933.0 1644.5L2926.9 1650.1L2920.3 1655.2L2913.2 1659.8L2905.7 1663.8L2897.6 1667.3L2888.9 1670.3L2879.7 1672.8L2869.8 1674.7L2859.1 1676.1L2847.0 1676.9L2830.7 1677.2L2463.8 1677.2L2447.5 1676.9L2435.4 1676.1L2424.7 1674.7L2414.8 1672.8L2405.6 1670.3L2396.9 1667.3L2388.8 1663.8L2381.3 1659.8L2374.2 1655.2L2367.6 1650.1L2361.5 1644.5L2355.9 1638.4L2350.8 1631.8L2346.2 1624.7L2342.2 1617.2L2338.7 1609.1L2335.7 1600.4L2333.2 1591.2L2331.3 1581.3L2329.9 1570.6L2329.1 1558.5L2328.8 1542.2Z" fill="#2c2c2c" stroke="#2c2c2c" stroke-opacity=".45" stroke-width="1.6"/><path d="M2337.5 474.3L2337.7 459.7L2338.5 448.9L2339.7 439.2L2341.4 430.4L2343.6 422.1L2346.3 414.4L2349.5 407.1L2353.1 400.3L2357.2 394.0L2361.8 388.1L2366.8 382.6L2372.3 377.6L2378.2 373.0L2384.5 368.9L2391.3 365.3L2398.6 362.1L2406.3 359.4L2414.6 357.2L2423.4 355.5L2433.1 354.3L2443.9 353.5L2458.5 353.3L2836.0 353.3L2850.6 353.5L2861.4 354.3L2871.1 355.5L2879.9 357.2L2888.2 359.4L2895.9 362.1L2903.2 365.3L2910.0 368.9L2916.3 373.0L2922.2 377.6L2927.7 382.6L2932.7 388.1L2937.3 394.0L2941.4 400.3L2945.0 407.1L2948.2 414.4L2950.9 422.1L2953.1 430.4L2954.8 439.2L2956.0 448.9L2956.8 459.7L2957.0 474.3L2957.0 1547.5L2956.8 1562.1L2956.0 1572.9L2954.8 1582.6L2953.1 1591.4L2950.9 1599.7L2948.2 1607.4L2945.0 1614.7L2941.4 1621.5L2937.3 1627.8L2932.7 1633.7L2927.7 1639.2L2922.2 1644.2L2916.3 1648.8L2910.0 1652.9L2903.2 1656.5L2895.9 1659.7L2888.2 1662.4L2879.9 1664.6L2871.1 1666.3L2861.4 1667.5L2850.6 1668.3L2836.0 1668.5L2458.5 1668.5L2443.9 1668.3L2433.1 1667.5L2423.4 1666.3L2414.6 1664.6L2406.3 1662.4L2398.6 1659.7L2391.3 1656.5L2384.5 1652.9L2378.2 1648.8L2372.3 1644.2L2366.8 1639.2L2361.8 1633.7L2357.2 1627.8L2353.1 1621.5L2349.5 1614.7L2346.3 1607.4L2343.6 1599.7L2341.4 1591.4L2339.7 1582.6L2338.5 1572.9L2337.7 1562.1L2337.5 1547.5Z" fill="#000"/><path d="M2351.2 479.6L2351.4 466.0L2352.1 455.9L2353.3 447.0L2354.9 438.7L2356.9 431.0L2359.4 423.8L2362.4 417.1L2365.7 410.8L2369.6 404.8L2373.8 399.3L2378.5 394.3L2383.5 389.6L2389.0 385.4L2395.0 381.5L2401.3 378.2L2408.0 375.2L2415.2 372.7L2422.9 370.7L2431.2 369.1L2440.1 367.9L2450.2 367.2L2463.8 367.0L2830.7 367.0L2844.3 367.2L2854.4 367.9L2863.3 369.1L2871.6 370.7L2879.3 372.7L2886.5 375.2L2893.2 378.2L2899.5 381.5L2905.5 385.4L2911.0 389.6L2916.0 394.3L2920.7 399.3L2924.9 404.8L2928.8 410.8L2932.1 417.1L2935.1 423.8L2937.6 431.0L2939.6 438.7L2941.2 447.0L2942.4 455.9L2943.1 466.0L2943.3 479.6L2943.3 1542.2L2943.1 1555.8L2942.4 1565.9L2941.2 1574.8L2939.6 1583.1L2937.6 1590.8L2935.1 1598.0L2932.1 1604.7L2928.8 1611.0L2924.9 1617.0L2920.7 1622.5L2916.0 1627.5L2911.0 1632.2L2905.5 1636.4L2899.5 1640.3L2893.2 1643.6L2886.5 1646.6L2879.3 1649.1L2871.6 1651.1L2863.3 1652.7L2854.4 1653.9L2844.3 1654.6L2830.7 1654.8L2463.8 1654.8L2450.2 1654.6L2440.1 1653.9L2431.2 1652.7L2422.9 1651.1L2415.2 1649.1L2408.0 1646.6L2401.3 1643.6L2395.0 1640.3L2389.0 1636.4L2383.5 1632.2L2378.5 1627.5L2373.8 1622.5L2369.6 1617.0L2365.7 1611.0L2362.4 1604.7L2359.4 1598.0L2356.9 1590.8L2354.9 1583.1L2353.3 1574.8L2352.1 1565.9L2351.4 1555.8L2351.2 1542.2Z" fill="#fff"/><path d="M2554.8 414.4L2554.9 411.5L2555.3 408.9L2555.9 406.5L2556.8 404.2L2558.0 402.0L2559.3 400.0L2560.9 398.1L2562.8 396.3L2564.8 394.6L2567.0 393.1L2569.5 391.8L2572.1 390.6L2574.9 389.6L2577.8 388.8L2581.0 388.1L2584.3 387.7L2587.8 387.4L2591.8 387.3L2702.2 387.3L2706.2 387.4L2709.7 387.7L2713.0 388.1L2716.2 388.8L2719.1 389.6L2721.9 390.6L2724.5 391.8L2727.0 393.1L2729.2 394.6L2731.2 396.3L2733.1 398.1L2734.7 400.0L2736.0 402.0L2737.2 404.2L2738.1 406.5L2738.7 408.9L2739.1 411.5L2739.2 414.4L2739.2 414.5L2739.1 417.4L2738.7 420.0L2738.1 422.4L2737.2 424.7L2736.0 426.9L2734.7 428.9L2733.1 430.8L2731.2 432.6L2729.2 434.3L2727.0 435.8L2724.5 437.1L2721.9 438.3L2719.1 439.3L2716.2 440.1L2713.0 440.8L2709.7 441.2L2706.2 441.5L2702.2 441.6L2591.8 441.6L2587.8 441.5L2584.3 441.2L2581.0 440.8L2577.8 440.1L2574.9 439.3L2572.1 438.3L2569.5 437.1L2567.0 435.8L2564.8 434.3L2562.8 432.6L2560.9 430.8L2559.3 428.9L2558.0 426.9L2556.8 424.7L2555.9 422.4L2555.3 420.0L2554.9 417.4L2554.8 414.5Z" fill="#000"/></svg>
<div class="abs" style="left:2328.4px;top:579px;width:1px;height:46px;background:#6b6b6b"></div>
<div class="abs" style="left:2328.4px;top:669px;width:1px;height:90px;background:#6b6b6b"></div>
<div class="abs" style="left:2328.4px;top:786px;width:1px;height:89.7px;background:#6b6b6b"></div>
<div class="abs" style="left:2965.4px;top:729.4px;width:1px;height:144.6px;background:#6b6b6b"></div>
<div class="abs" style="left:2351.5px;top:875.8px;width:591px;text-align:center;font-size:39.3px;line-height:50.6px;color:#000;letter-spacing:.25px;white-space:pre">What biscuit does a short
person like?</div>
<div class="abs" style="left:2351.5px;top:1138.7px;width:591px;text-align:center;font-size:39.3px;line-height:50.6px;color:#000;letter-spacing:.25px;white-space:pre">Shortbread.</div>
<div class="abs" style="left:2295px;top:1755.5px;width:163px;height:52px;border-radius:12px;background:#fff;box-shadow:0 1.5px 5px rgba(0,0,0,.16),0 0 1px rgba(0,0,0,.14)"></div>
<svg style="left:2313px;top:1769px" width="26.5" height="26.5" viewBox="0 0 26.5 26.5" ><circle cx="13.25" cy="13.25" r="13.25" fill="#3478f6"/><path d="M9.6 7.6Q9.6 6.4 10.7 7L19.3 12.3Q20.4 13.25 19.3 14.2L10.7 19.5Q9.6 20.1 9.6 18.9Z" fill="#fff"/></svg>
<svg style="left:2361px;top:1770px" width="23.8" height="23.8" viewBox="0 0 24.5 24.5" ><rect x="1.1" y="1.1" width="22.3" height="22.3" rx="3.2" fill="none" stroke="#4a4a4a" stroke-width="2.2"/><path d="M9 5.6V17.6L11.9 14.9L14.2 19.9L16.4 18.9L14.2 14L18 13.8Z" fill="#4a4a4a"/></svg>
<svg style="left:2414.8px;top:1772.4px" width="23.2" height="19.6" viewBox="0 0 23.2 19.6" ><rect x="0.9" y="0.9" width="4.4" height="6.8" rx=".9" fill="none" stroke="#4a4a4a" stroke-width="1.7"/><rect x="0.9" y="11.9" width="4.4" height="6.8" rx=".9" fill="none" stroke="#4a4a4a" stroke-width="1.7"/><rect x="9.4" y="0.9" width="4.4" height="6.8" rx=".9" fill="none" stroke="#4a4a4a" stroke-width="1.7"/><rect x="9.4" y="11.9" width="4.4" height="6.8" rx=".9" fill="none" stroke="#4a4a4a" stroke-width="1.7"/><rect x="17.9" y="0.9" width="4.4" height="6.8" rx=".9" fill="none" stroke="#4a4a4a" stroke-width="1.7"/><rect x="17.9" y="11.9" width="4.4" height="6.8" rx=".9" fill="none" stroke="#4a4a4a" stroke-width="1.7"/></svg>
<div class="abs" style="left:2478px;top:1755.5px;width:63px;height:52px;border-radius:12px;background:#fff;box-shadow:0 1.5px 5px rgba(0,0,0,.16),0 0 1px rgba(0,0,0,.14)"></div>
<svg style="left:2497px;top:1770px" width="24.8" height="25.4" viewBox="0 0 26 25" preserveAspectRatio="none"><rect x="1.1" y="1.1" width="23.8" height="9.4" rx="4.7" fill="none" stroke="#4a4a4a" stroke-width="2.1"/><circle cx="6" cy="5.8" r="2.7" fill="#4a4a4a"/><rect x="0" y="14" width="26" height="11" rx="5.5" fill="#4a4a4a"/><circle cx="20.2" cy="19.5" r="3" fill="#fff"/></svg>
<div class="abs" style="left:2561px;top:1755.5px;width:54px;height:52px;border-radius:12px;background:#fff;box-shadow:0 1.5px 5px rgba(0,0,0,.16),0 0 1px rgba(0,0,0,.14)"></div>
<svg style="left:2580.8px;top:1771.2px" width="14.8" height="22.6" viewBox="0 0 16 24" preserveAspectRatio="none"><rect x="1.1" y="1.1" width="13.8" height="21.8" rx="3" fill="#d0d0d0" stroke="#4a4a4a" stroke-width="2.1"/><path d="M5.8 3.6H10.2M5.2 20.2H10.8" stroke="#4a4a4a" stroke-width="1.5" stroke-linecap="round"/></svg>
<div class="abs" style="left:2792px;top:1755.5px;width:208px;height:52px;border-radius:12px;background:#fff;box-shadow:0 1.5px 5px rgba(0,0,0,.16),0 0 1px rgba(0,0,0,.14)"></div>
<svg style="left:2810.5px;top:1769px" width="26" height="26" viewBox="0 0 26 26" ><circle cx="10.6" cy="10.6" r="8.8" fill="none" stroke="#4a4a4a" stroke-width="2.8"/><path d="M17.4 17.4L24 24" stroke="#4a4a4a" stroke-width="3.5" stroke-linecap="round"/><path d="M6.6 10.6H14.6" stroke="#4a4a4a" stroke-width="2.1" stroke-linecap="round"/></svg>
<svg style="left:2858.5px;top:1769px" width="26" height="26" viewBox="0 0 26 26" ><circle cx="10.6" cy="10.6" r="8.8" fill="none" stroke="#4a4a4a" stroke-width="2.8"/><path d="M17.4 17.4L24 24" stroke="#4a4a4a" stroke-width="3.5" stroke-linecap="round"/><path d="M8.8 8.2L10.9 6.6V14.8" fill="none" stroke="#4a4a4a" stroke-width="1.9" stroke-linecap="round" stroke-linejoin="round"/></svg>
<svg style="left:2906.5px;top:1769px" width="26" height="26" viewBox="0 0 26 26" ><circle cx="10.6" cy="10.6" r="8.8" fill="none" stroke="#7c7c7c" stroke-width="2.8"/><path d="M17.4 17.4L24 24" stroke="#7c7c7c" stroke-width="3.5" stroke-linecap="round"/><rect x="7.2" y="7.2" width="6.8" height="6.8" rx="1.4" fill="none" stroke="#7c7c7c" stroke-width="1.8"/></svg>
<svg style="left:2954.2px;top:1769px" width="26" height="26" viewBox="0 0 26 26" ><circle cx="10.6" cy="10.6" r="8.8" fill="none" stroke="#4a4a4a" stroke-width="2.8"/><path d="M17.4 17.4L24 24" stroke="#4a4a4a" stroke-width="3.5" stroke-linecap="round"/><path d="M6.6 10.6H14.6M10.6 6.6V14.6" stroke="#4a4a4a" stroke-width="2.1" stroke-linecap="round"/></svg>
</div>
</body></html>
